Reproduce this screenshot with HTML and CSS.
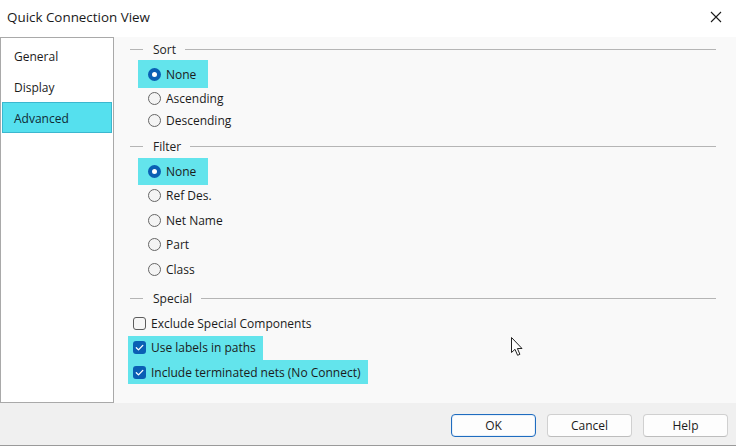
FILE: index.html
```html
<!DOCTYPE html>
<html>
<head>
<meta charset="utf-8">
<link rel="stylesheet" href="styles.css">
</head>
<body>
<div class="window">
  <div class="titlebar">
    <span class="title">Quick Connection View</span>
    <svg class="close" width="12" height="12" viewBox="0 0 12 12"><path d="M1 1 L11 11 M11 1 L1 11" stroke="#1a1a1a" stroke-width="1.1" fill="none"/></svg>
  </div>
  <div class="content">
    <div class="nav">
      <div class="nav-item">General</div>
      <div class="nav-item">Display</div>
      <div class="nav-item active">Advanced</div>
    </div>
    <div class="main">
      <div class="group-head first"><span class="lead"></span><span class="gtitle">Sort</span><span class="rule"></span></div>
      <div class="opt first"><span class="lab radio-lab hl tall"><span class="radio on"></span>None</span></div>
      <div class="opt"><span class="lab radio-lab"><span class="radio"></span>Ascending</span></div>
      <div class="opt short"><span class="lab radio-lab"><span class="radio"></span>Descending</span></div>

      <div class="group-head"><span class="lead"></span><span class="gtitle">Filter</span><span class="rule"></span></div>
      <div class="opt first"><span class="lab radio-lab hl tall2"><span class="radio on"></span>None</span></div>
      <div class="opt"><span class="lab radio-lab"><span class="radio"></span>Ref Des.</span></div>
      <div class="opt"><span class="lab radio-lab"><span class="radio"></span>Net Name</span></div>
      <div class="opt"><span class="lab radio-lab"><span class="radio"></span>Part</span></div>
      <div class="opt"><span class="lab radio-lab"><span class="radio"></span>Class</span></div>

      <div class="group-head"><span class="lead"></span><span class="gtitle">Special</span><span class="rule"></span></div>
      <div class="opt first"><span class="lab check-lab"><span class="check"></span>Exclude Special Components</span></div>
      <div class="opt"><span class="lab check-lab hl"><span class="check on"><svg width="13" height="13" viewBox="0 0 13 13"><path d="M3.3 6.7 L5.5 8.9 L9.8 4.4" stroke="#fff" stroke-width="1.3" fill="none" stroke-linecap="round" stroke-linejoin="round"/></svg></span>Use labels in paths</span></div>
      <div class="opt"><span class="lab check-lab hl"><span class="check on"><svg width="13" height="13" viewBox="0 0 13 13"><path d="M3.3 6.7 L5.5 8.9 L9.8 4.4" stroke="#fff" stroke-width="1.3" fill="none" stroke-linecap="round" stroke-linejoin="round"/></svg></span>Include terminated nets (No Connect)</span></div>
    </div>
  </div>
  <div class="footer">
    <button class="btn default">OK</button>
    <button class="btn">Cancel</button>
    <button class="btn">Help</button>
  </div>
  <svg class="cursor" width="13" height="21" viewBox="0 0 13 21"><path d="M0.5 0.5 L0.5 15.5 L4 12.3 L6.6 18.3 L8.9 17.3 L6.4 11.5 L11 11.5 Z" fill="#fff" stroke="#222" stroke-width="1" stroke-linejoin="round"/></svg>
</div>
</body>
</html>
```

FILE: styles.css
```css
html, body {
  margin: 0;
  padding: 0;
}
body {
  width: 736px;
  height: 446px;
  overflow: hidden;
  font-family: "Open Sans", "Noto Sans", sans-serif;
  font-size: 12px;
  color: #1b1b1b;
  background: #f9f9f9;
}
.window {
  position: relative;
  width: 736px;
  height: 446px;
  display: flex;
  flex-direction: column;
}
.titlebar {
  height: 37px;
  flex: none;
  display: flex;
  align-items: center;
  justify-content: space-between;
  padding: 0 14px 3px 7px;
  box-sizing: border-box;
  background: #ffffff;
}
.title {
  font-size: 13.4px;
  color: #1a1a1a;
}
.close {
  display: block;
}
.content {
  flex: none;
  height: 366px;
  display: flex;
  background: #f9f9f9;
}
.nav {
  width: 114px;
  flex: none;
  box-sizing: border-box;
  border: 1px solid #a9a9a9;
  background: #ffffff;
  padding: 2px 1px 0 1px;
}
.nav-item {
  height: 31px;
  line-height: 31px;
  padding-left: 11px;
  box-sizing: border-box;
  border: 1px solid transparent;
}
.nav-item.active {
  background: #55e0ee;
  border-color: #3cb7cf;
  color: #0f2a35;
}
.main {
  flex: 1;
  display: flex;
  flex-direction: column;
  padding: 0 20px 0 16px;
}
.group-head {
  height: 16px;
  display: flex;
  align-items: center;
  margin-top: 8.5px;
}
.group-head.first {
  margin-top: 4px;
}
.lead {
  width: 13px;
  height: 1px;
  background: #b5b5b5;
  flex: none;
}
.gtitle {
  padding: 0 9px 0 10px;
  color: #222;
}
.rule {
  flex: 1;
  height: 1px;
  background: #b5b5b5;
}
.opt {
  height: 24.5px;
  display: flex;
  align-items: center;
}
.opt.first {
  margin-top: 4px;
}
.group-head + .opt.first {
  margin-top: 5px;
}
.opt.short {
  height: 18.5px;
}
.lab {
  display: inline-flex;
  align-items: center;
  box-sizing: border-box;
  height: 24px;
  white-space: nowrap;
}
.radio-lab {
  margin-left: 8px;
  padding: 0 12px 0 10px;
}
.check-lab {
  margin-left: -2px;
  padding: 0 7px 0 5px;
}
.lab.tall {
  height: 28px;
}
.lab.tall2 {
  height: 27px;
}
.hl {
  background: #63e4ec;
}
.radio {
  width: 13px;
  height: 13px;
  box-sizing: border-box;
  border-radius: 50%;
  border: 1px solid #666666;
  background: #f4f4f4;
  margin-right: 5px;
  flex: none;
}
.radio.on {
  border: 4px solid #0a5fb4;
  background: #ffffff;
}
.check {
  width: 13px;
  height: 13px;
  box-sizing: border-box;
  border-radius: 3px;
  border: 1px solid #5c5c5c;
  background: #f6f6f6;
  margin-right: 5px;
  flex: none;
  display: flex;
}
.check.on {
  border: none;
  background: #0a5fb4;
}
.footer {
  flex: 1;
  background: #f0f0f0;
  border-bottom: 1px solid #9a9a9a;
  display: flex;
  justify-content: flex-end;
  align-items: flex-start;
  padding: 11px 8px 0 0;
  gap: 10px;
}
.btn {
  width: 85px;
  height: 23px;
  box-sizing: border-box;
  border: 1px solid #d0d0d0;
  border-bottom-color: #bdbdbd;
  border-radius: 4px;
  background: #fdfdfd;
  font-family: "Open Sans", "Noto Sans", sans-serif;
  font-size: 12px;
  color: #1b1b1b;
  padding: 0;
  margin-left: 1px;
}
.btn.default {
  border: 1px solid #1f6cbf;
  box-shadow: inset 0 0 0 1px #e6f0fa;
}
.cursor {
  position: absolute;
  left: 511px;
  top: 337px;
}
```
